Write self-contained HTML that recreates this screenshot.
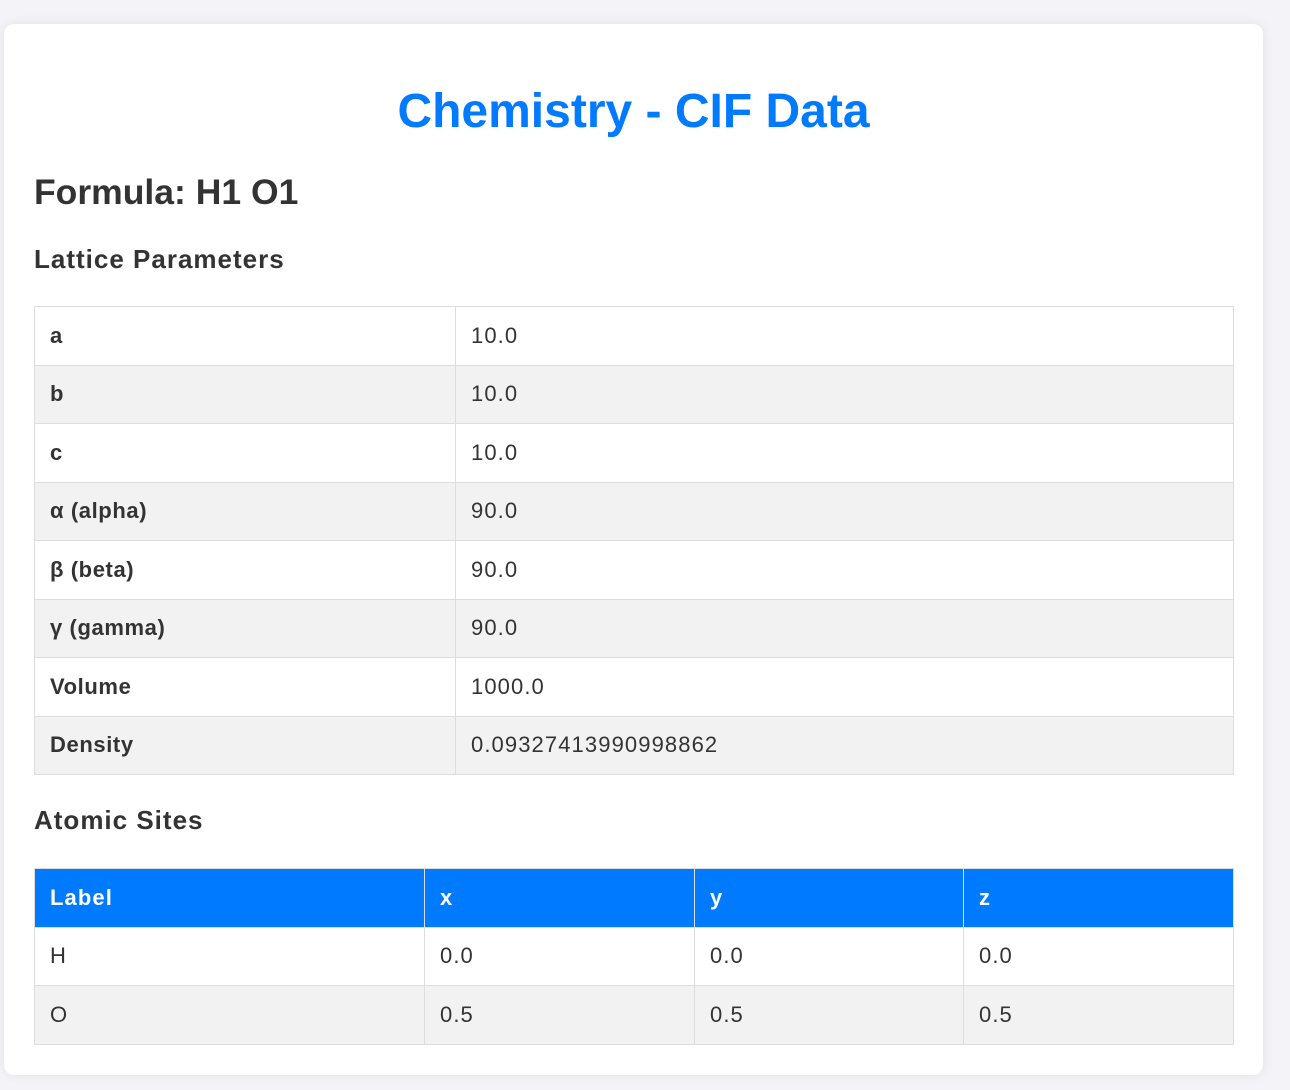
<!DOCTYPE html>
<html><head><meta charset="utf-8"><style>
body{margin:0;background:#f4f4f8;font-family:"Liberation Sans",Arial,sans-serif;color:#333;width:1290px;height:1090px;overflow:hidden;position:relative}
.card{position:absolute;left:4px;top:24px;width:1259px;height:1051px;background:#fff;border-radius:10px;box-shadow:0 0 12px rgba(0,0,0,.08)}
.t{position:absolute;margin:0;white-space:nowrap}
h1{left:0;width:1259px;text-align:center;top:60px;font-size:48px;color:#007bff;line-height:56px}
h2{left:30px;top:148px;font-size:35.5px;line-height:40px}
h3{left:30px;font-size:26px;line-height:30px;letter-spacing:1px}
table{position:absolute;left:30px;width:1200px;border-collapse:collapse;font-size:22px;letter-spacing:1.1px}
tr{height:58.5px}
td,th{border:1.3px solid #ddd;padding:0 15px;text-align:left}
.s td{background:#f2f2f2}
th{background:#007bff;color:#fff;border-color:#ddd}
.k{font-weight:bold;width:390px;letter-spacing:.6px}
</style></head><body><div class="card">
<h1 class="t">Chemistry - CIF Data</h1>
<h2 class="t">Formula: H1 O1</h2>
<h3 class="t" style="top:220px">Lattice Parameters</h3>
<table style="top:282px">
<tr><td class="k">a</td><td>10.0</td></tr>
<tr class="s"><td class="k">b</td><td>10.0</td></tr>
<tr><td class="k">c</td><td>10.0</td></tr>
<tr class="s"><td class="k">α (alpha)</td><td>90.0</td></tr>
<tr><td class="k">β (beta)</td><td>90.0</td></tr>
<tr class="s"><td class="k">γ (gamma)</td><td>90.0</td></tr>
<tr><td class="k">Volume</td><td>1000.0</td></tr>
<tr class="s"><td class="k">Density</td><td>0.09327413990998862</td></tr>
</table>
<h3 class="t" style="top:781px">Atomic Sites</h3>
<table style="top:844px">
<tr><th style="width:359px">Label</th><th style="width:239px">x</th><th style="width:238px">y</th><th>z</th></tr>
<tr><td>H</td><td>0.0</td><td>0.0</td><td>0.0</td></tr>
<tr class="s"><td>O</td><td>0.5</td><td>0.5</td><td>0.5</td></tr>
</table>
</div></body></html>
